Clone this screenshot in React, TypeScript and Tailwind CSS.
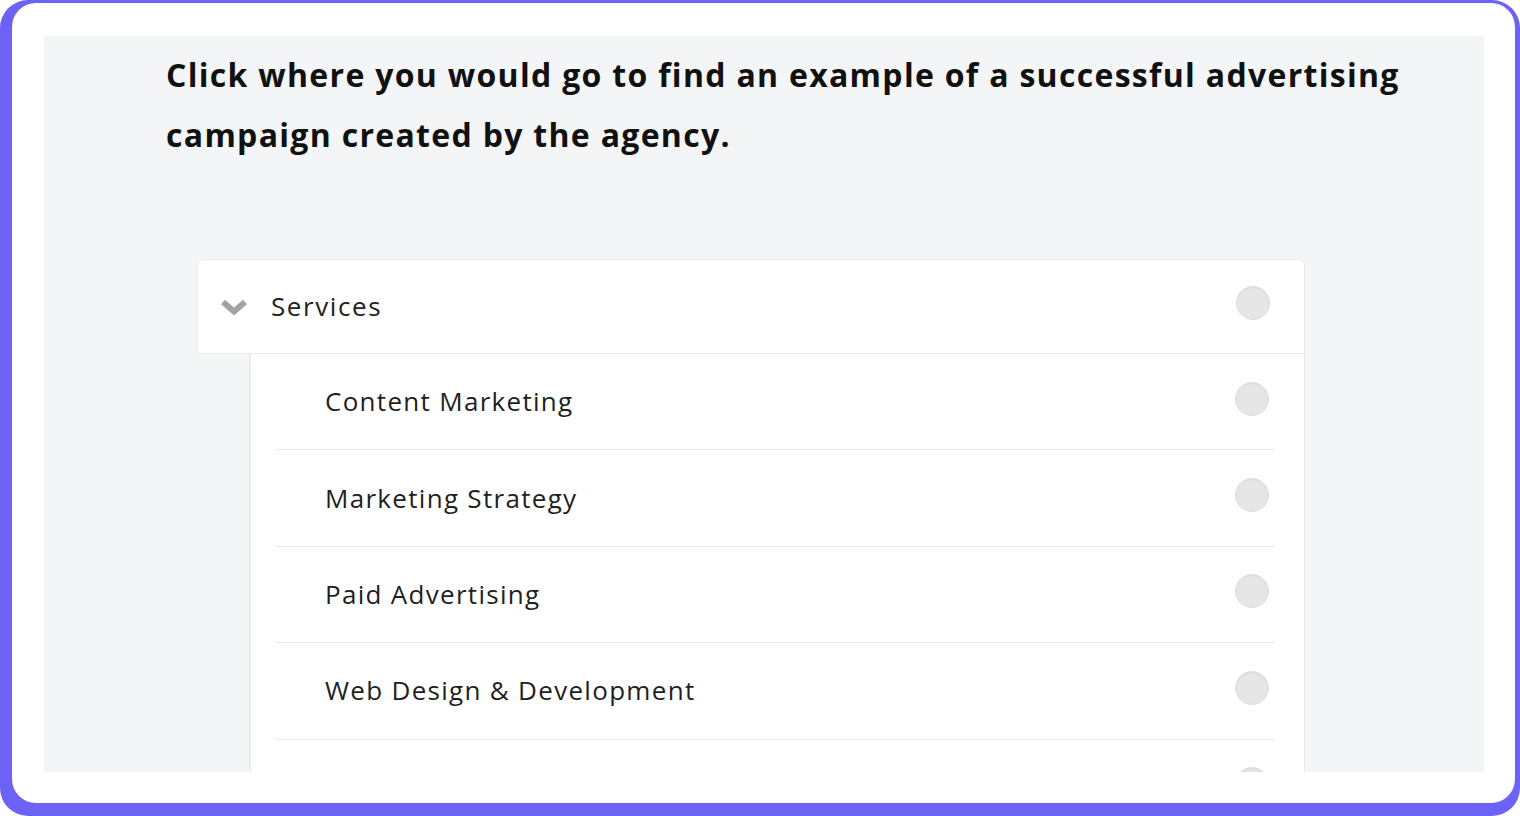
const subItems = ['Content Marketing', 'Marketing Strategy', 'Paid Advertising', 'Web Design & Development', '']

function Radio() {
  return <div className="w-[34px] h-[34px] shrink-0 rounded-full bg-[#e6e6e6] border border-[#dedede] shadow-[inset_0_1px_2px_rgba(0,0,0,0.05)]"></div>
}

function Chevron() {
  return (
    <svg width="30" height="18" viewBox="0 0 30 18" className="shrink-0">
      <polyline points="4,4 15,13.5 26,4" fill="none" stroke="#a3a3a3" strokeWidth="6" strokeLinejoin="miter" />
    </svg>
  )
}

export default function App() {
  return (
    <div className="w-[1520px] h-[816px] bg-white" style={{ fontFamily: '"Open Sans", "Noto Sans", sans-serif' }}>
      <div className="w-full h-full bg-[#6c62f5] rounded-[28px] pl-[12px] pt-[3px] pr-[5px] pb-[13px]">
        <div className="w-full h-full bg-white rounded-[24px] pl-[32px] pt-[33px] pr-[31px] pb-[31px]">
          <div className="w-full h-full bg-[#f4f5f7] overflow-hidden">
            {/* Question */}
            <h1 className="pl-[122px] pr-[40px] pt-[9px] text-[32px] leading-[60px] font-bold text-[#111111] tracking-[1.3px]">
              Click where you would go to find an example of a successful advertising campaign created by the agency.
            </h1>

            {/* Tree */}
            <div className="ml-[153px] mt-[94px] w-[1108px]">
              <div className="h-[95px] flex items-center bg-white border border-[#ebebeb] rounded-t-[6px] pl-[21px] pr-[34px]">
                <Chevron />
                <span className="ml-[22px] text-[26px] text-[#222222] tracking-[1.6px] flex-1">Services</span>
                <div className="mb-[8px]"><Radio /></div>
              </div>
              <div className="ml-[52px] bg-white border-l-2 border-r border-[#ebebeb]">
                {subItems.map((item, i) => (
                  <div key={i} className="ml-[25px] mr-[29px] h-[96.4px] border-b border-[#e8e8e8] flex items-center pl-[49px] pr-[6px]">
                    <span className="flex-1 text-[26px] text-[#1f1f1f] tracking-[1.3px]">{item}</span>
                    <div className="mb-[6px]"><Radio /></div>
                  </div>
                ))}
              </div>
            </div>
          </div>
        </div>
      </div>
    </div>
  )
}
